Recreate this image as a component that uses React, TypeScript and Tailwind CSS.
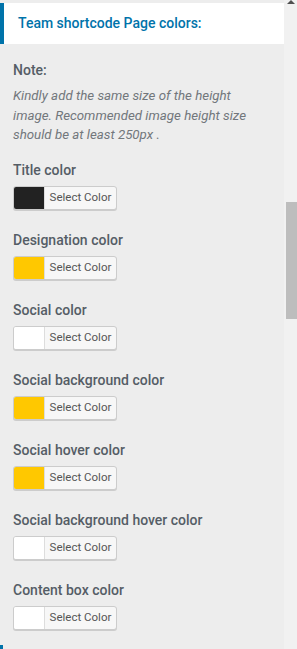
const fields = [
  { label: 'Title color', color: '#222222' },
  { label: 'Designation color', color: '#ffc800' },
  { label: 'Social color', color: '#ffffff' },
  { label: 'Social background color', color: '#ffc800' },
  { label: 'Social hover color', color: '#ffc800' },
  { label: 'Social background hover color', color: '#ffffff' },
  { label: 'Content box color', color: '#ffffff' },
]

function ColorButton({ color }: { color: string }) {
  return (
    <button className="flex h-[24px] w-[104px] overflow-hidden rounded-[3px] border border-[#cccccc] bg-[#f7f7f7] p-0 shadow-[0_1px_0_#cccccc]">
      <span className="h-full w-[30px] shrink-0" style={{ backgroundColor: color }} />
      <span className="flex h-full flex-1 items-center justify-center border-l border-[#dddddd] text-[11.5px] leading-none text-[#555555]">
        Select Color
      </span>
    </button>
  )
}

export default function App() {
  return (
    <div className="flex h-[649px] w-[297px] overflow-hidden bg-[#ededed] font-['Roboto',sans-serif]">
      <div className="flex-1 pt-[3px]">
        <div className="flex h-[41px] items-center border-l-4 border-[#0073aa] bg-white pl-[14px]">
          <h2 className="text-[14px] font-medium text-[#0073aa]">Team shortcode Page colors:</h2>
        </div>

        <div className="px-[13px]">
          <h3 className="mt-[16px] text-[14px] font-medium leading-[20px] text-[#555d66]">Note:</h3>
          <p className="mt-[6px] max-w-[250px] text-[13.3px] italic leading-[19.5px] text-[#72777c]">
            Kindly add the same size of the height image. Recommended image height size should be at least 250px .
          </p>

          <div className="mt-[15.5px] flex flex-col gap-[20px]">
            {fields.map(field => (
              <div key={field.label} className="flex flex-col items-start gap-[6px]">
                <span className="text-[14px] font-medium leading-[20px] text-[#555d66]">{field.label}</span>
                <ColorButton color={field.color} />
              </div>
            ))}
          </div>
        </div>
        <div className="mt-[15px] h-[4px] w-[3px] bg-[#0073aa]" />
      </div>

      <div className="flex w-[13px] shrink-0 flex-col bg-[#f1f1f1]">
        <div className="ml-[3px] h-0 w-0 border-x-[4px] border-b-[4px] border-x-transparent border-b-[#505050]" />
        <div className="ml-[2px] mt-[198px] h-[117px] w-[11px] bg-[#bdbdbd]" />
      </div>
    </div>
  )
}
